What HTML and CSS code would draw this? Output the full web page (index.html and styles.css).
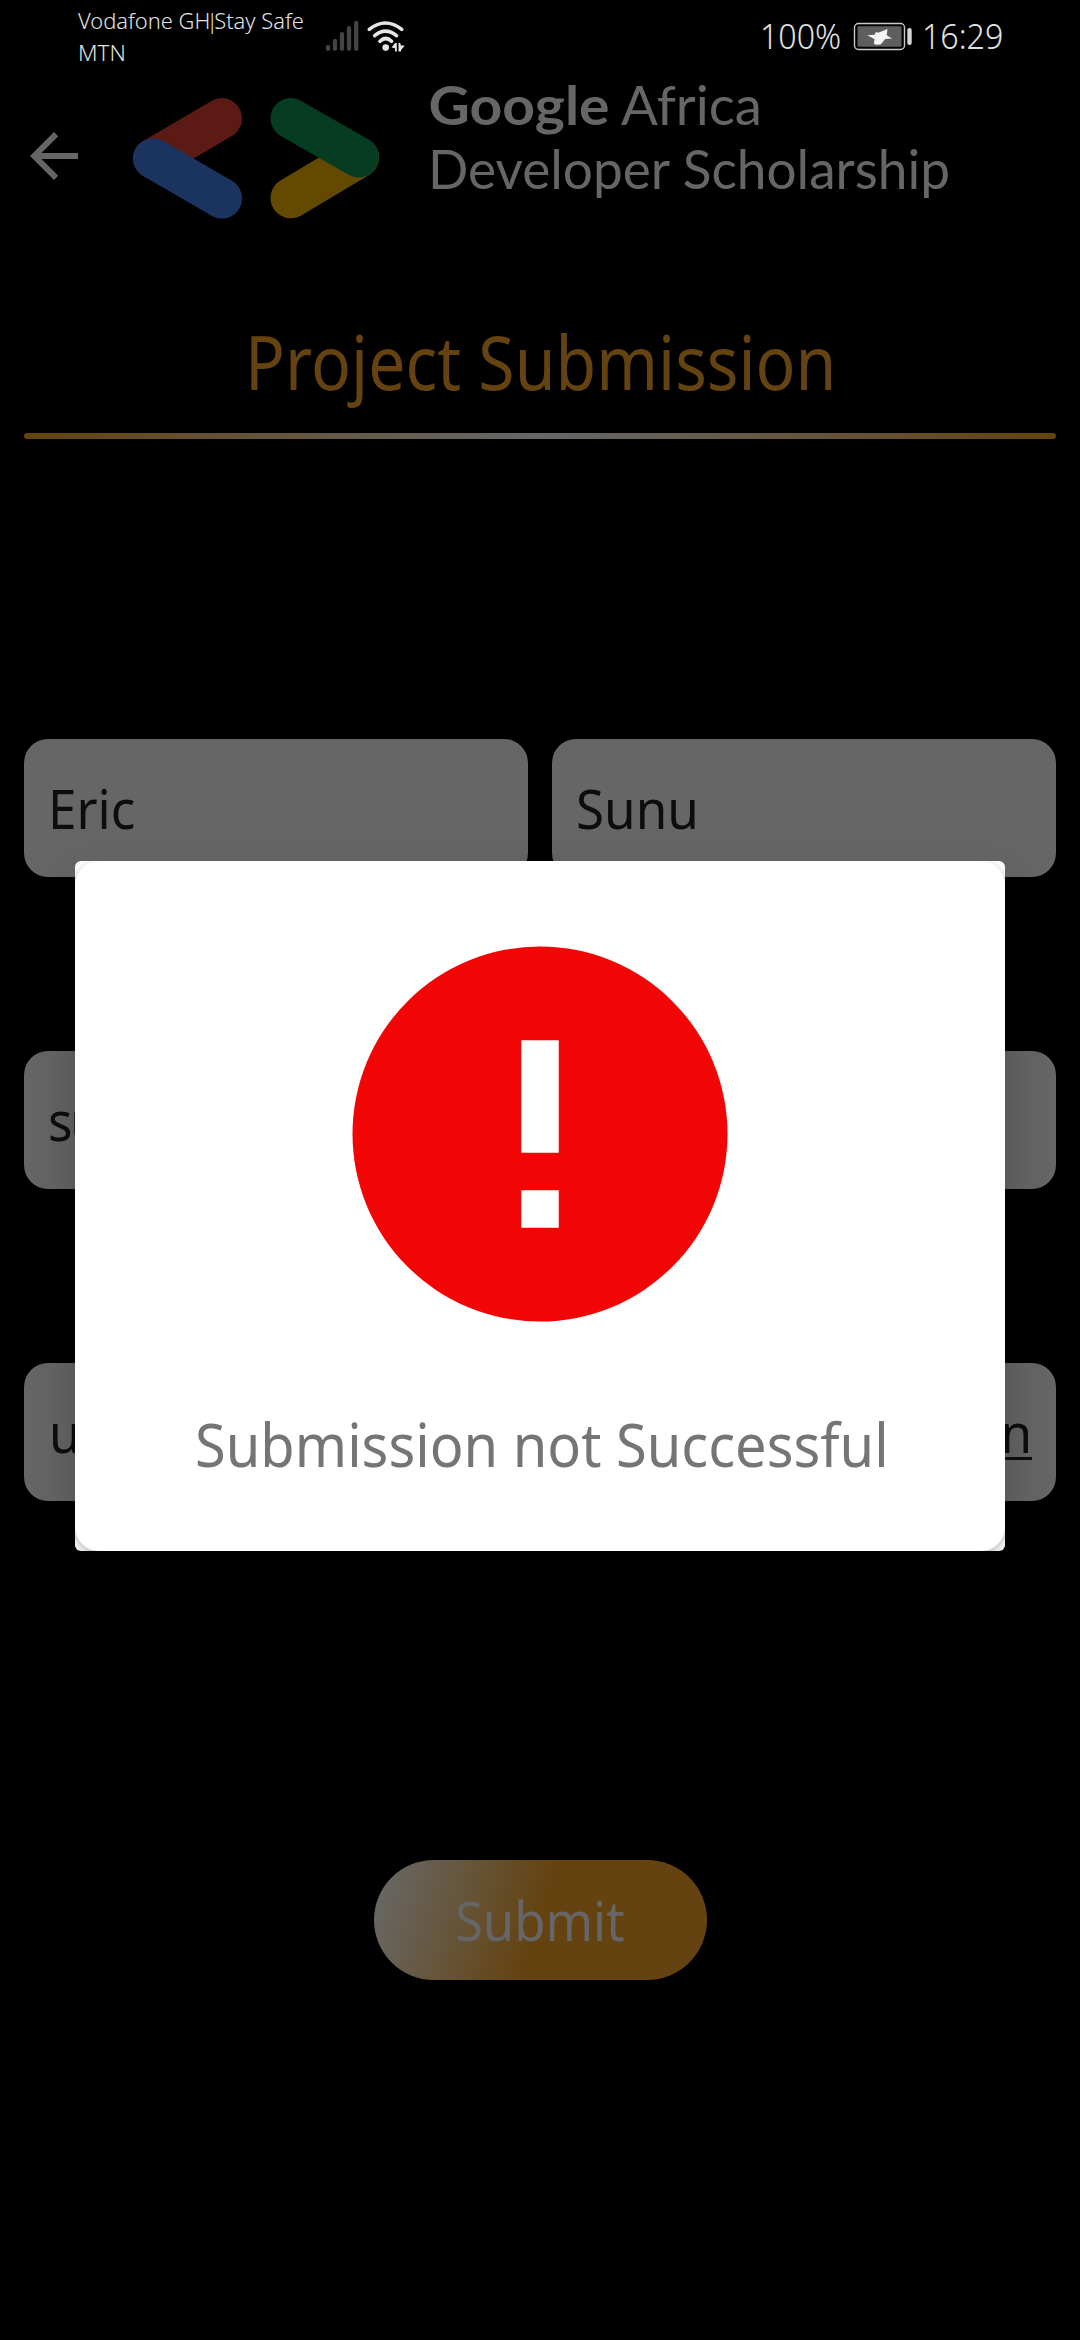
FILE: index.html
```html
<!DOCTYPE html>
<html lang="en">
<head>
<meta charset="utf-8">
<title>Project Submission</title>
<link rel="stylesheet" href="styles.css">
</head>
<body>
<div class="screen">
  <div class="status">
    <div class="carriers">
      <div><span class="squeeze carrier-a">Vodafone GH<span class="bar">|</span>Stay Safe</span></div>
      <div><span class="squeeze carrier-b">MTN</span></div>
    </div>
    <svg class="signals" width="84" height="40" viewBox="324 16 84 40" fill="none">
      <g stroke="#444" stroke-width="4.3" stroke-linecap="round">
        <path d="M328 47.2v1.6M335 41v7.8M342 34.2v14.6M349 28.2v20.6M356.200 23v25.800"/>
      </g>
      <g stroke="#e6e6e6" stroke-width="3.6" stroke-linecap="round">
        <path d="M369.300 29.300Q385.500 16.700 401.700 29.300M374.700 35.700Q385.500 26.700 396.500 35.700M380 41.300Q385.700 35.700 391.500 41.300"/>
      </g>
      <circle cx="385.700" cy="47.600" r="3.300" fill="#e6e6e6"/>
      <path d="M391.500 47.500l3.500-4.500h1.800v8.500h-1.800V48.200zM398.500 43h1.800l.5 2.500h3.900l-3.700 4.700V51.500h-2.500z" fill="#e6e6e6"/>
    </svg>
    <div class="status-right">
      <span class="squeeze percent">100%</span>
      <svg class="battery" width="60" height="30" viewBox="852 21 60 30">
        <rect x="853.500" y="23.500" width="50" height="26" rx="4" fill="none" stroke="#c9c9c9" stroke-width="1.400"/>
        <rect x="856.500" y="26.300" width="44" height="20.400" rx="1" fill="#5e5e5e"/>
        <path d="M866.300 35.300l7.200-.5 1.500-2.800 2.200.8L886.500 29l-.8 6.300 5.300 3.200-6.800.5-4.500 5.500-5 .2-2-1.500 1-4z" fill="#f5f5f5"/>
        <rect x="906.300" y="28" width="4.400" height="17" rx="2" fill="#d5d5d5"/>
      </svg>
      <span class="squeeze time">16:29</span>
    </div>
  </div>

  <header class="header">
    <svg class="back" width="72" height="72" viewBox="0 0 24 24" fill="#666"><path d="M20 11H7.830l5.590-5.590L12 4l-8 8 8 8 1.410-1.410L7.830 13H20v-2z"/></svg>
    <svg class="logo" width="830" height="160" viewBox="130 60 830 160">
      <g stroke-width="40.600" stroke-linecap="round">
        <path d="M221.800 118.400L153.300 158.500" stroke="#5c1a14"/>
        <path d="M153.300 158.500L221.800 198.300" stroke="#1a335f"/>
        <path d="M290.800 198L358.700 157.500" stroke="#644900"/>
        <path d="M290.800 118.400L358.700 157.200" stroke="#063d22"/>
      </g>
      <g class="logo-text">
        <text class="strong" x="428.500" y="124.500" textLength="181" lengthAdjust="spacingAndGlyphs">Google</text>
        <text x="621" y="124.500" textLength="141" lengthAdjust="spacingAndGlyphs">Africa</text>
        <text x="428" y="189" textLength="522" lengthAdjust="spacingAndGlyphs">Developer Scholarship</text>
      </g>
    </svg>
  </header>

  <h1 class="title"><span class="squeeze">Project Submission</span></h1>
  <div class="rule"></div>

  <main class="form">
    <div class="row">
      <div class="field"><span class="squeeze">Eric</span></div>
      <div class="field"><span class="squeeze">Sunu</span></div>
    </div>
    <div class="field email"><span class="squeeze">su</span></div>
    <div class="field link"><span class="squeeze">u</span><span class="squeeze tail">n</span></div>
    <button class="submit"><span class="squeeze">Submit</span></button>
  </main>

  <div class="overlay">
    <div class="dialog">
      <div class="card">
        <svg width="450" height="450" viewBox="0 0 24 24">
          <circle cx="12" cy="12" r="10" fill="#f20605"/>
          <path d="M11 7h2v6h-2zM11 15h2v2h-2z" fill="#fff"/>
        </svg>
        <p class="message"><span class="squeeze">Submission not Successful</span></p>
      </div>
    </div>
  </div>
</div>
</body>
</html>
```

FILE: styles.css
```css
* { box-sizing: border-box; margin: 0; padding: 0; }

body {
  background: #000;
  font-family: "Noto Sans", "Open Sans", sans-serif;
}

.screen {
  position: relative;
  width: 1080px;
  height: 2340px;
  overflow: hidden;
  background: #000;
}

svg { display: block; flex: none; }

.squeeze {
  display: inline-block;
  white-space: nowrap;
  transform-origin: 0 50%;
}

/* status bar */
.status {
  display: flex;
  align-items: center;
  height: 72px;
  padding: 0 78px;
  color: #e2e2e2;
  font-weight: 300;
}
.carriers { width: 246px; font-size: 22px; line-height: 32px; }
.carrier-a { transform: scaleX(.995); }
.carrier-b { transform: scaleX(1.02); }
.bar { margin: 0 -4px; }
.status-right {
  display: flex;
  align-items: center;
  margin-left: auto;
  font-size: 34px;
  line-height: 72px;
}
.percent { width: 93px; margin-left: -40px; transform: scaleX(.945); }
.battery { margin-right: 9px; }
.time { width: 80px; transform: scaleX(.945); }

/* app bar */
.header {
  display: flex;
  height: 238px;
  padding-left: 18px;
}
.back { margin-top: 48px; }
.logo { margin: -12px 0 0 40px; }
.logo-text {
  font-family: Lato, sans-serif;
  font-size: 54px;
  fill: #666;
}
.logo-text .strong { font-weight: 700; }

.title {
  height: 123px;
  padding: 2px 0 0 2px;
  color: #644311;
  font-size: 74px;
  font-weight: 400;
  line-height: 100px;
  text-align: center;
}
.title .squeeze { transform: scaleX(.894); transform-origin: 50% 50%; }

.rule {
  height: 6px;
  margin: 0 24px;
  border-radius: 3px;
  background: linear-gradient(90deg, #644311, #66686a 50%, #644311);
}

/* form */
.form {
  display: flex;
  flex-direction: column;
  gap: 174px;
  padding: 300px 24px 0;
}
.row { display: flex; gap: 24px; }
.field {
  display: flex;
  flex: 1 1 0;
  justify-content: space-between;
  padding: 0 24px;
  border-radius: 24px;
  background: #666;
  color: #0d0d0d;
  font-size: 55px;
  line-height: 138px;
}
.form > .field { flex: none; }
.field .squeeze { transform: scaleX(.93); }
.email { letter-spacing: -2.500px; }
.link { padding-left: 25px; }
.field .tail {
  transform-origin: 100% 50%;
  text-decoration: underline;
  text-decoration-thickness: 2.500px;
  text-underline-offset: 4px;
}

.submit {
  align-self: center;
  width: 333px;
  height: 120px;
  margin-top: 185px;
  border: 0;
  border-radius: 60px;
  background: linear-gradient(107.600deg, #686a6b, #644311 49%);
  color: #666;
  font: 55px/120px "Noto Sans", "Open Sans", sans-serif;
}
.submit .squeeze { transform: scaleX(.925); transform-origin: 50% 50%; }

/* result dialog */
.overlay {
  position: absolute;
  inset: 0;
  padding: 861px 75px 0;
}
.dialog {
  height: 690px;
  border-radius: 6px;
  overflow: hidden;
  background: #fff;
  box-shadow: 0 24px 50px rgba(0, 0, 0, .25);
}
.card {
  display: flex;
  flex-direction: column;
  align-items: center;
  height: 100%;
  padding-top: 48px;
  border-radius: 24px;
  background: #fff;
  box-shadow: 0 3px 8px rgba(0, 0, 0, .3);
}
.message {
  margin-top: 45px;
  padding-left: 3px;
  color: #757575;
  font-size: 61px;
  line-height: 80px;
}
.message .squeeze { transform: scaleX(.918); transform-origin: 50% 50%; }
```
